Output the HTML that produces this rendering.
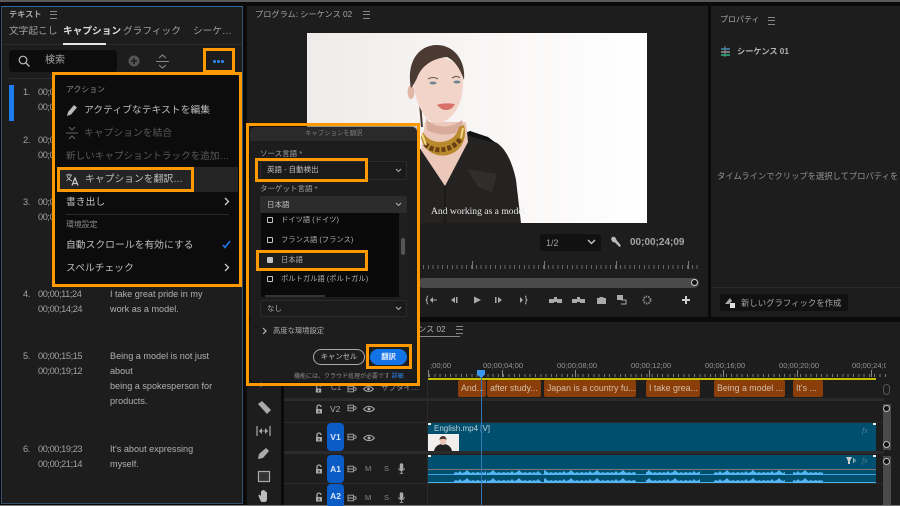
<!DOCTYPE html>
<html lang="ja"><head><meta charset="utf-8"><title>Premiere</title>
<style>
html,body{margin:0;padding:0;background:#0a0a0a}
#s{position:relative;width:900px;height:506px;overflow:hidden;background:#0a0a0a;font-family:"Liberation Sans","Noto Sans CJK JP",sans-serif;color:#bdbdbd}
#s div,#s span,#s svg{position:absolute}
#s span span{position:static}
.t{white-space:nowrap;line-height:14px;font-size:10px;margin-top:1px}
.tc{font-size:9.2px;letter-spacing:-.4px;color:#a2a2a2;margin-top:-1px}
.tx{font-size:9.1px;color:#b0b0b0;margin-top:-1px}
.m{font-size:9.8px;color:#bdbdbd}
.md{font-size:9.8px;color:#5a5a5a}
.d{font-size:7.5px;color:#b0b0b0}
.l{font-size:7.3px;color:#b0b0b0}
.r{font-size:7.6px;color:#959595}
.h{font-size:8.2px;color:#a8a8a8}
.p{background:#1d1d1d}
.o{border:3px solid #f90;box-sizing:border-box}
.ham{width:7px;height:6px;border-top:1px solid #888;border-bottom:1px solid #888}
.ham::after{content:"";position:absolute;left:0;top:2px;width:7px;height:1px;background:#888}
.clip{background:#8a3f0a;border-radius:2px;height:17px;top:380px;color:#d8bca6;font-size:8.8px;line-height:17px;padding-left:3px;box-sizing:border-box;white-space:nowrap;overflow:hidden}
.sel{left:260px;width:147px;border-radius:2px;box-sizing:border-box;border:1px solid #2b2b2b}
.cb{left:267px;width:4px;height:4px;border:1.5px solid #c4c4c4;border-radius:1px}
.bl{background:#0b5cc7;border-radius:4px;left:327px;width:17px;color:#d7e6fa;font-size:8.500px;font-weight:bold;text-align:center}
</style></head><body><div id="s">
<svg width="0" height="0" style="left:0;top:0"><defs>
<symbol id="lock" viewBox="0 0 10 10"><path d="M3 5V3a2 2 0 0 1 4 0" fill="none" stroke="#aaa" stroke-width="1.300"/><rect x="2" y="5" width="6" height="4.500" fill="#aaa"/><rect x="4.400" y="6.400" width="1.200" height="2" fill="#222"/></symbol>
<symbol id="film" viewBox="0 0 12 10"><path d="M1 1.500h7v7H1zM8 3l3 .7v2.600l-3 .7M1 5h7" fill="none" stroke="#aaa" stroke-width="1.100"/></symbol>
<symbol id="eye" viewBox="0 0 12 8"><path d="M.7 4C3.500.5 8.500.5 11.300 4 8.500 7.500 3.500 7.500.7 4z" fill="none" stroke="#aaa" stroke-width="1.100"/><circle cx="6" cy="4" r="1.500" fill="#aaa"/></symbol>
<symbol id="mic" viewBox="0 0 8 12"><rect x="2" y="0" width="4" height="8" rx="2" fill="#aaa"/><path d="M.8 5.500c0 4 6.400 4 6.400 0M4 9v2.500M2 11.500h4" fill="none" stroke="#aaa"/></symbol>
<pattern id="wv" width="26" height="5" patternUnits="userSpaceOnUse"><path d="M0 5V3l2-1 2 1 2-2 2 2 3-1 2-2 2 2 2 1 2-1 2 1 3-1 2 1v2z" fill="#55b5f2"/></pattern>
</defs></svg>

<div style="left:0;top:0;width:900px;height:2px;background:#5a5a5a"></div>
<div style="left:0;top:505px;width:900px;height:1px;background:#777"></div>

<!-- left panel -->
<div class="p" style="left:1px;top:6px;width:242px;height:498px;border:1px solid #35506c;border-top-color:#2c6aa8;box-sizing:border-box"></div>
<span class="t h" style="left:9px;top:7px;font-weight:bold">テキスト</span>
<div class="ham" style="left:50px;top:11px"></div>
<span class="t" style="left:9px;top:24px;font-size:9.700px;color:#a0a0a0">文字起こし</span>
<span class="t" style="left:63px;top:24px;font-size:9.700px;font-weight:bold;color:#dcdcdc">キャプション</span>
<span class="t" style="left:123px;top:24px;font-size:9.700px;color:#a0a0a0">グラフィック</span>
<span class="t" style="left:193px;top:24px;font-size:9.700px;color:#a0a0a0">シーケ…</span>
<div style="left:4px;top:44px;width:238px;height:1px;background:#2c2c2c"></div>
<div style="left:63px;top:43px;width:43px;height:2px;background:#e8e8e8"></div>
<div style="left:9px;top:50px;width:108px;height:22px;background:#0c0c0c;border-radius:3px"></div>
<svg style="left:18px;top:55px" width="12" height="12" viewBox="0 0 12 12"><circle cx="5" cy="5" r="3.800" fill="none" stroke="#bbb" stroke-width="1.200"/><path d="M8 8l3.500 3.500" stroke="#bbb" stroke-width="1.300"/></svg>
<span class="t" style="left:45px;top:53px;font-size:10px;color:#a5a5a5">検索</span>
<svg style="left:128px;top:55px" width="12" height="12" viewBox="0 0 12 12"><circle cx="6" cy="6" r="5.500" fill="#555"/><path d="M6 3v6M3 6h6" stroke="#1d1d1d" stroke-width="1.500"/></svg>
<svg style="left:156px;top:54px" width="13" height="15" viewBox="0 0 13 15"><path d="M3 4l3.500-3L10 4M0 7.500h13M3 11l3.500 3 3.500-3" fill="none" stroke="#888" stroke-width="1.100"/></svg>
<div class="o" style="left:203px;top:48px;width:32px;height:25px"></div>
<span style="left:213px;top:60px;width:3px;height:3px;border-radius:2px;background:#2f8af5"></span>
<span style="left:217px;top:60px;width:3px;height:3px;border-radius:2px;background:#2f8af5"></span>
<span style="left:221px;top:60px;width:3px;height:3px;border-radius:2px;background:#2f8af5"></span>
<div style="left:9px;top:78px;width:45px;height:1px;background:#2c2c2c"></div>
<div style="left:9px;top:85px;width:5px;height:36px;background:#1f7bf0"></div>

<span class="t tc" style="left:23px;top:86px">1.</span><span class="t tc" style="left:38px;top:86px">00;00</span><span class="t tc" style="left:38px;top:101px">00;00</span>
<span class="t tc" style="left:23px;top:134px">2.</span><span class="t tc" style="left:38px;top:134px">00;00</span><span class="t tc" style="left:38px;top:149px">00;00</span>
<span class="t tc" style="left:23px;top:196px">3.</span><span class="t tc" style="left:38px;top:196px">00;00</span><span class="t tc" style="left:38px;top:211px">00;00</span>
<span class="t tc" style="left:23px;top:288px">4.</span><span class="t tc" style="left:38px;top:288px">00;00;11;24</span><span class="t tc" style="left:38px;top:303px">00;00;14;24</span>
<span class="t tx" style="left:110px;top:288px">I take great pride in my</span><span class="t tx" style="left:110px;top:303px">work as a model.</span>
<span class="t tc" style="left:23px;top:350px">5.</span><span class="t tc" style="left:38px;top:350px">00;00;15;15</span><span class="t tc" style="left:38px;top:365px">00;00;19;12</span>
<span class="t tx" style="left:110px;top:350px">Being a model is not just</span><span class="t tx" style="left:110px;top:365px">about</span><span class="t tx" style="left:110px;top:380px">being a spokesperson for</span><span class="t tx" style="left:110px;top:395px">products.</span>
<span class="t tc" style="left:23px;top:443px">6.</span><span class="t tc" style="left:38px;top:443px">00;00;19;23</span><span class="t tc" style="left:38px;top:458px">00;00;21;14</span>
<span class="t tx" style="left:110px;top:443px">It's about expressing</span><span class="t tx" style="left:110px;top:458px">myself.</span>

<!-- menu -->
<div style="left:55px;top:75px;width:184px;height:209px;background:#0c0c0c;border-radius:3px"></div>
<div style="left:57px;top:167px;width:181px;height:25px;background:#242424"></div>
<div class="o" style="left:52px;top:72px;width:190px;height:215px"></div>
<div class="o" style="left:57px;top:167px;width:137px;height:25px"></div>
<span class="t" style="left:66px;top:82px;font-size:7.900px;color:#8a8a8a">アクション</span>
<svg style="left:66px;top:104px" width="12" height="13" viewBox="0 0 12 13"><path d="M1 12l1-4 6-7 3 2.500-6 7z" fill="#bbb"/></svg>
<span class="t m" style="left:84px;top:103px">アクティブなテキストを編集</span>
<svg style="left:66px;top:127px" width="12" height="13" viewBox="0 0 12 13"><path d="M3 0l3 3 3-3M0 6h12M3 12l3-3 3 3" fill="none" stroke="#666" stroke-width="1"/></svg>
<span class="t md" style="left:84px;top:126px">キャプションを結合</span>
<span class="t" style="left:66px;top:149px;font-size:9.600px;color:#5a5a5a">新しいキャプショントラックを追加…</span>
<svg style="left:66px;top:173px" width="13" height="13" viewBox="0 0 13 13"><path d="M0 2h6M3 .5V2M1 3c1 3 3 4 5 5M5 2.500C4 5 2.500 6.500.5 7.500" fill="none" stroke="#bbb" stroke-width=".9"/><path d="M6 12.500L9 5l3 7.500M7 10.500h4" fill="none" stroke="#ccc" stroke-width="1.200"/></svg>
<span class="t m" style="left:85px;top:172px">キャプションを翻訳…</span>
<span class="t m" style="left:66px;top:195px">書き出し</span>
<svg style="left:224px;top:197px" width="6" height="9" viewBox="0 0 6 9"><path d="M1 1l3.500 3.500L1 8" fill="none" stroke="#ccc" stroke-width="1.300"/></svg>
<div style="left:66px;top:214px;width:163px;height:1px;background:#2a2a2a"></div>
<span class="t" style="left:66px;top:217px;font-size:7.900px;color:#8a8a8a">環境設定</span>
<span class="t m" style="left:66px;top:238px">自動スクロールを有効にする</span>
<svg style="left:222px;top:240px" width="9" height="9" viewBox="0 0 9 9"><path d="M1 5l2 2.500L8 1" fill="none" stroke="#1f7bf0" stroke-width="1.500"/></svg>
<span class="t m" style="left:66px;top:261px">スペルチェック</span>
<svg style="left:224px;top:263px" width="6" height="9" viewBox="0 0 6 9"><path d="M1 1l3.500 3.500L1 8" fill="none" stroke="#ccc" stroke-width="1.300"/></svg>

<!-- program panel -->
<div class="p" style="left:247px;top:6px;width:461px;height:311px"></div>
<span class="t h" style="left:255px;top:7px">プログラム: シーケンス 02</span>
<div class="ham" style="left:363px;top:11px"></div>
<svg style="left:307px;top:33px" width="340" height="190" viewBox="307 33 340 190">
<defs><linearGradient id="bg" x1="0" x2="1"><stop offset="0" stop-color="#efebea"/><stop offset=".5" stop-color="#f8f6f5"/><stop offset="1" stop-color="#fff"/></linearGradient></defs>
<rect x="307" y="33" width="340" height="190" fill="url(#bg)"/>
<path d="M418 223V150L470 131 497 143C507 150 513 165 516 180L521 223z" fill="#252321"/>
<path d="M470 131l18 6 8 6-12-3-18-5z" fill="#111"/>
<path d="M421 150L445 186 468 142 466 122H425z" fill="#ecc8ba"/>
<path d="M426 118c6 10 24 12 36 2l1 10c-10 6-26 6-36 0z" fill="#d9ab9b"/>
<path d="M420 103l2 24" stroke="#4a3a32" stroke-width="2"/>
<ellipse cx="411" cy="92" rx="3.500" ry="7" fill="#e3b7a6"/>
<path d="M414 80C414 50 462 50 463 80 464 100 455 122 437 123 424 123 414 100 414 80z" fill="#f2d4c9"/>
<path d="M411 88C406 60 420 45 437 45 455 45 466 62 464 80 460 68 454 60 447 57 435 58 422 64 417 78 415 82 413 86 411 88z" fill="#4a3a32"/>
<path d="M428 79c3-2 7-2 10 0M452 78c3-2 6-2 8 0" stroke="#6b5d54" stroke-width="1.100" fill="none"/>
<ellipse cx="433" cy="83" rx="3.500" ry="1.500" fill="#6f8592"/><ellipse cx="457" cy="82" rx="3.500" ry="1.500" fill="#6f8592"/>
<path d="M437 105c4-2 12-2 18-1-2 4-5 6-9 6s-6-2-9-5z" fill="#d77066"/>
<path d="M421 137C423 150 435 158 448 155 460 152 468 140 464 125L459 127C458 135 450 142 440 142 432 142 426 138 423 132z" fill="#b98a2d"/>
<path d="M425 144C433 153 452 152 461 138" fill="none" stroke="#6a3f14" stroke-width="5" stroke-dasharray="4 2"/>
<path d="M422 134l4 11M463 128l-2 10" stroke="#f0d585" stroke-width="2"/>
<path d="M467 169l30 5-5 18-14-5z" fill="#302d2a"/>
<path d="M445 186v37" stroke="#111" stroke-width="1"/>
</svg>
<span class="t" style="left:431px;top:204px;font-family:'Liberation Serif','Noto Serif CJK SC',serif;font-size:9.600px;color:#e8e8e8">And working as a model</span>

<div style="left:540px;top:234px;width:61px;height:17px;background:#111;border-radius:2px"></div>
<span class="t" style="left:546px;top:235px;font-size:9px;color:#a5a5a5">1/2</span>
<svg style="left:587px;top:239px" width="9" height="6" viewBox="0 0 9 6"><path d="M1 1l3.500 3.500L8 1" fill="none" stroke="#ccc" stroke-width="1.300"/></svg>
<svg style="left:610px;top:236px" width="12" height="12" viewBox="0 0 12 12"><path d="M1 3l1.500-2.500 3 1 1 2.500L11 9.500 9.500 11 5 6.500 2.500 6z" fill="#bbb"/></svg>
<span class="t" style="left:630px;top:235px;font-size:10px;font-weight:bold;color:#a5a5a5">00;00;24;09</span>
<div style="left:423px;top:265px;width:277px;height:4px;background:repeating-linear-gradient(90deg,#666 0 1px,transparent 1px 4.800px)"></div>
<div style="left:472px;top:261px;width:1px;height:8px;background:#777"></div><div style="left:544px;top:261px;width:1px;height:8px;background:#777"></div><div style="left:616px;top:261px;width:1px;height:8px;background:#777"></div><div style="left:688px;top:261px;width:1px;height:8px;background:#777"></div>
<div style="left:418px;top:278px;width:281px;height:10px;background:#4a4a4a;border-radius:5px"></div>
<div style="left:691px;top:279px;width:5px;height:5px;border-radius:50%;background:#111;border:1.500px solid #ccc"></div>
<svg style="left:425px;top:294px" width="270" height="12" viewBox="425 294 270 12" fill="#aaa">
<path d="M428 296c-1 0-1 1-1 2v1l-1 1 1 1v1c0 1 0 2 1 2M430 300h7" stroke="#aaa" fill="none"/><path d="M433 297l-3 3 3 3z"/>
<path d="M451 300l4-3v6zM456 297h1.500v6H456z"/><path d="M474 296.500l7 3.500-7 3.500z"/>
<path d="M495 297h1.500v6H495zM498 297l4 3-4 3z"/><path d="M517 300h5M520 297l3 3-3 3z"/><path d="M525 296c1 0 1 1 1 2v1l1 1-1 1v1c0 1 0 2-1 2" stroke="#aaa" fill="none"/>
<path d="M549 299h5v-2h3v2h5v4h-5v-1h-3v1h-5z"/><path d="M572 299h5v-2h3v2h5v4h-5v-1h-3v1h-5z"/>
<path d="M597 298h2l1-1h3l1 1h2v6h-9z"/>
<path d="M617 295h6v5h-6z"/><path d="M621 300h5v4h-5" fill="none" stroke="#aaa"/>
<circle cx="647" cy="300" r="3.500" fill="none" stroke="#888" stroke-width="2" stroke-dasharray="1.500 1"/>
<path d="M682 299h3v-3h2v3h3v2h-3v3h-2v-3h-3z" fill="#ccc"/></svg>

<!-- properties panel -->
<div class="p" style="left:711px;top:6px;width:189px;height:311px"></div>
<span class="t h" style="left:720px;top:12px;font-size:8px">プロパティ</span>
<div class="ham" style="left:768px;top:17px"></div>
<svg style="left:720px;top:46px" width="11" height="11" viewBox="0 0 11 11"><path d="M5 0v11" stroke="#888"/><path d="M1 3h9" stroke="#4a8bb5" stroke-width="1.500"/><path d="M1 6h9" stroke="#999" stroke-width="1.500"/><path d="M1 9h9" stroke="#2fb58a" stroke-width="1.500"/></svg>
<span class="t" style="left:737px;top:44px;font-size:8.200px;font-weight:bold;color:#b0b0b0">シーケンス 01</span>
<span class="t" style="left:717px;top:168px;font-size:8.300px;color:#949494">タイムラインでクリップを選択してプロパティを</span>
<div style="left:711px;top:287px;width:189px;height:1px;background:#2a2a2a"></div>
<div style="left:720px;top:294px;width:128px;height:17px;background:#111;border-radius:2px"></div>
<svg style="left:725px;top:297px" width="11" height="11" viewBox="0 0 11 11"><path d="M0 7l5-6 2 3-3 3z" fill="#aaa"/><rect x="5" y="6" width="5" height="5" fill="#ddd"/></svg>
<span class="t" style="left:741px;top:295px;font-size:8.400px;color:#a5a5a5">新しいグラフィックを作成</span>

<!-- tools and timeline -->
<div class="p" style="left:247px;top:322px;width:34px;height:183px"></div>
<div class="p" style="left:284px;top:322px;width:616px;height:183px"></div>
<span class="t" style="left:418px;top:322px;font-size:8.200px;color:#b0b0b0">ンス 02</span>
<div class="ham" style="left:456px;top:326px"></div>
<div style="left:418px;top:336px;width:42px;height:1px;background:#888"></div>

<span class="t r" style="left:430px;top:358px">;00;00</span>
<span class="t r" style="left:483px;top:358px">00;00;04;00</span>
<span class="t r" style="left:557px;top:358px">00;00;08;00</span>
<span class="t r" style="left:631px;top:358px">00;00;12;00</span>
<span class="t r" style="left:705px;top:358px">00;00;16;00</span>
<span class="t r" style="left:779px;top:358px">00;00;20;00</span>
<span class="t r" style="left:852px;top:358px;width:34px;overflow:hidden">00;00;24;00</span>
<div style="left:429px;top:374px;width:457px;height:3px;background:repeating-linear-gradient(90deg,#777 0 1px,transparent 1px 5.300px)"></div>
<div style="left:428px;top:370px;width:1px;height:7px;background:#888"></div><div style="left:502px;top:370px;width:1px;height:7px;background:#888"></div><div style="left:575px;top:370px;width:1px;height:7px;background:#888"></div><div style="left:649px;top:370px;width:1px;height:7px;background:#888"></div><div style="left:723px;top:370px;width:1px;height:7px;background:#888"></div><div style="left:797px;top:370px;width:1px;height:7px;background:#888"></div><div style="left:871px;top:370px;width:1px;height:7px;background:#888"></div>
<div style="left:428px;top:378px;width:448px;height:2px;background:#c5c000"></div>

<div class="clip" style="left:458px;width:28px">And...</div>
<div class="clip" style="left:487px;width:54px">after study...</div>
<div class="clip" style="left:544px;width:92px">Japan is a country fu...</div>
<div class="clip" style="left:646px;width:54px">I take grea...</div>
<div class="clip" style="left:714px;width:71px">Being a model ...</div>
<div class="clip" style="left:793px;width:30px">It's ...</div>

<div style="left:284px;top:398px;width:600px;height:3px;background:#2b2b2b"></div>
<div style="left:284px;top:422px;width:600px;height:1px;background:#2b2b2b"></div>
<div style="left:284px;top:451px;width:600px;height:3px;background:#2b2b2b"></div>
<div style="left:284px;top:483px;width:600px;height:1px;background:#2b2b2b"></div>
<div style="left:427px;top:380px;width:1px;height:125px;background:#2a2a2a"></div>

<!-- track headers -->
<svg style="left:314px;top:384px" width="9" height="9"><use href="#lock"/></svg>
<span class="t" style="left:331px;top:380px;font-size:8px;color:#999">C1</span>
<svg style="left:347px;top:385px" width="10" height="8"><use href="#film"/></svg>
<svg style="left:363px;top:385px" width="11" height="8"><use href="#eye"/></svg>
<span class="t" style="left:381px;top:380px;font-size:7.600px;color:#999">サブタイ…</span>
<svg style="left:314px;top:404px" width="10" height="10"><use href="#lock"/></svg>
<span class="t" style="left:330px;top:401px;font-size:8.500px;color:#aaa">V2</span>
<svg style="left:347px;top:404px" width="10" height="8"><use href="#film"/></svg>
<svg style="left:363px;top:405px" width="12" height="8"><use href="#eye"/></svg>
<svg style="left:314px;top:432px" width="10" height="10"><use href="#lock"/></svg>
<div class="bl" style="top:423px;height:28px;line-height:28px">V1</div>
<svg style="left:347px;top:433px" width="10" height="8"><use href="#film"/></svg>
<svg style="left:363px;top:434px" width="12" height="8"><use href="#eye"/></svg>
<svg style="left:314px;top:464px" width="10" height="10"><use href="#lock"/></svg>
<div class="bl" style="top:455px;height:28px;line-height:28px">A1</div>
<svg style="left:347px;top:465px" width="10" height="8"><use href="#film"/></svg>
<span class="t" style="left:365px;top:461px;font-size:7.500px;color:#888">M</span>
<span class="t" style="left:384px;top:461px;font-size:7.500px;color:#888">S</span>
<svg style="left:398px;top:463px" width="7" height="11"><use href="#mic"/></svg>
<svg style="left:314px;top:492px" width="10" height="10"><use href="#lock"/></svg>
<div class="bl" style="top:484px;height:24px;line-height:24px">A2</div>
<svg style="left:347px;top:494px" width="10" height="8"><use href="#film"/></svg>
<span class="t" style="left:365px;top:490px;font-size:7.500px;color:#888">M</span>
<span class="t" style="left:384px;top:490px;font-size:7.500px;color:#888">S</span>
<svg style="left:398px;top:492px" width="7" height="11"><use href="#mic"/></svg>

<!-- tool icons -->
<svg style="left:254px;top:380px" width="20" height="125" viewBox="254 380 20 125">
<path d="M258 404l4-3 9 9-4 4z" fill="#aaa"/>
<path d="M257 426v10M270 426v10" stroke="#aaa" stroke-width="1.200"/><path d="M260 431h7M259.500 431l2-2v4zM267.500 431l-2-2v4z" stroke="#aaa" stroke-width=".8" fill="#aaa"/>
<path d="M258 459l1-5 7-6 3 3-6 7z" fill="#aaa"/>
<rect x="258.500" y="471.500" width="11" height="10" fill="#333" stroke="#aaa" stroke-width="1.200"/>
<path d="M259 497c-1-2 0-3 1-2l1 1v-5h1.500v4-5h1.500v5-4.500h1.500v4.500-3h1.500v7c0 2-1 3-3 3h-2c-1 0-2-2-3-5z" fill="#bbb"/>
<path d="M258 384h6M261 381v6" stroke="#888"/></svg>

<!-- clips -->
<div style="left:428px;top:423px;width:448px;height:28px;background:#004f6e"></div>
<span class="t" style="left:434px;top:421px;font-size:8px;color:#c0d2da">English.mp4 [V]</span>
<svg style="left:428px;top:434px" width="31" height="17" viewBox="0 0 31 17"><rect width="31" height="17" fill="#f1efee"/><path d="M6 17c1-5 5-7 9-7s8 2 9 7z" fill="#222"/><ellipse cx="15" cy="7" rx="3.200" ry="4" fill="#e8c5b6"/><path d="M11.500 6c0-3 2-4 3.500-4s3.500 1 3.500 4c-1-1.500-6-1.500-7 0z" fill="#4b3931"/></svg>
<span class="t" style="left:862px;top:423px;font-family:'Liberation Serif',serif;font-style:italic;font-size:8px;color:#4f7f95">fx</span>
<div style="left:428px;top:455px;width:448px;height:28px;background:#004f6e"></div>
<span class="t" style="left:862px;top:453px;font-family:'Liberation Serif',serif;font-style:italic;font-size:8px;color:#4f7f95">fx</span>
<svg style="left:846px;top:457px" width="10" height="7" viewBox="0 0 10 7"><path d="M0 0h6L4 4v3H2V4z" fill="#ccc"/><path d="M7.500 1v5M9 2v3" stroke="#9bb"/></svg>
<div style="left:428px;top:469px;width:448px;height:1px;background:#777"></div>
<div style="left:428px;top:474px;width:448px;height:1px;background:#3aa3e0"></div>
<div style="left:428px;top:482px;width:448px;height:1px;background:#4ab0ee"></div>
<svg style="left:428px;top:470px" width="448" height="13" viewBox="0 0 448 13">
<g fill="url(#wv)"><rect x="26" y="0" width="32" height="5"/><rect x="59" y="0" width="54" height="5"/><rect x="116" y="0" width="92" height="5"/><rect x="218" y="0" width="54" height="5"/><rect x="286" y="0" width="71" height="5"/><rect x="365" y="0" width="30" height="5"/></g>
<g fill="url(#wv)" transform="translate(0 8)"><rect x="26" y="0" width="32" height="5"/><rect x="59" y="0" width="54" height="5"/><rect x="116" y="0" width="92" height="5"/><rect x="218" y="0" width="54" height="5"/><rect x="286" y="0" width="71" height="5"/><rect x="365" y="0" width="30" height="5"/></g></svg>
<div style="left:481px;top:377px;width:1px;height:128px;background:#3278b4"></div>
<svg style="left:477px;top:370px" width="9" height="8" viewBox="0 0 9 8"><path d="M0 0h8v4.500L4 8 0 4.500z" fill="#3b97f2"/></svg>
<div style="left:428px;top:423px;width:3px;height:2px;background:#eee"></div>
<div style="left:873px;top:423px;width:3px;height:2px;background:#eee"></div>
<div style="left:428px;top:455px;width:3px;height:2px;background:#eee"></div>
<div style="left:873px;top:455px;width:3px;height:2px;background:#eee"></div>

<!-- scrollbars -->
<div style="left:883px;top:384px;width:7px;height:11px;border:1px solid #555;border-radius:4px;box-sizing:border-box"></div>
<div style="left:883px;top:404px;width:8px;height:46px;background:#4a4a4a"></div>
<div style="left:883px;top:405px;width:5px;height:5px;border-radius:50%;background:#111;border:1.500px solid #bbb"></div>
<div style="left:883px;top:441px;width:5px;height:5px;border-radius:50%;background:#111;border:1.500px solid #bbb"></div>
<div style="left:883px;top:456px;width:8px;height:49px;background:#4a4a4a"></div>
<div style="left:883px;top:458px;width:5px;height:5px;border-radius:50%;background:#111;border:1.500px solid #bbb"></div>

<!-- dialog -->
<div style="left:250px;top:127px;width:167px;height:255px;background:#1d1d1d;border-radius:5px;box-shadow:0 0 3px #000"></div>
<div style="left:250px;top:127px;width:167px;height:14px;background:#2a2a2a;border-radius:5px 5px 0 0"></div>
<span class="t" style="left:305px;top:126px;font-size:6.400px;color:#7d7d7d">キャプションを翻訳</span>
<span class="t d" style="left:260px;top:146px;color:#a0a0a0">ソース言語 *</span>
<div class="sel" style="top:161px;height:19px;background:#1b1b1b"></div>
<span class="t d" style="left:267px;top:162px;color:#c0c0c0">英語 - 自動検出</span>
<svg style="left:395px;top:168px" width="7" height="5" viewBox="0 0 7 5"><path d="M1 1l2.500 2.500L6 1" fill="none" stroke="#aaa" stroke-width="1.100"/></svg>
<div class="o" style="left:255px;top:158px;width:113px;height:24px"></div>
<span class="t d" style="left:260px;top:181px;color:#a0a0a0">ターゲット言語 *</span>
<div class="sel" style="top:196px;height:17px;background:#2c2c2c"></div>
<span class="t d" style="left:267px;top:197px;color:#c0c0c0">日本語</span>
<svg style="left:395px;top:202px" width="7" height="5" viewBox="0 0 7 5"><path d="M1 1l2.500 2.500L6 1" fill="none" stroke="#aaa" stroke-width="1.100"/></svg>
<div style="left:261px;top:213px;width:138px;height:84px;background:#0a0a0a;overflow:hidden"></div>
<div style="left:399px;top:213px;width:8px;height:84px;background:#1f1f1f"></div>
<div style="left:401px;top:238px;width:4px;height:17px;background:#555;border-radius:2px"></div>
<div class="cb" style="top:217px"></div>
<span class="t l" style="left:281px;top:212px">ドイツ語 (ドイツ)</span>
<div class="cb" style="top:237px"></div>
<span class="t l" style="left:281px;top:232px">フランス語 (フランス)</span>
<div style="left:258px;top:251px;width:108px;height:18px;background:#1d1d1d"></div>
<div class="cb" style="top:257px;background:#c4c4c4"></div>
<span class="t l" style="left:281px;top:252px">日本語</span>
<div class="o" style="left:256px;top:250px;width:112px;height:21px"></div>
<div class="cb" style="top:276px"></div>
<span class="t l" style="left:281px;top:271px;width:110px;overflow:hidden">ポルトガル語 (ポルトガル)</span>
<div style="left:265px;top:295px;width:60px;height:2px;background:#333"></div>
<div class="sel" style="top:300px;height:17px;background:#1b1b1b"></div>
<span class="t d" style="left:267px;top:301px">なし</span>
<svg style="left:395px;top:306px" width="7" height="5" viewBox="0 0 7 5"><path d="M1 1l2.500 2.500L6 1" fill="none" stroke="#aaa" stroke-width="1.100"/></svg>
<svg style="left:262px;top:327px" width="6" height="8" viewBox="0 0 6 8"><path d="M1 1l3 3-3 3" fill="none" stroke="#bbb" stroke-width="1.200"/></svg>
<span class="t l" style="left:273px;top:323px">高度な環境設定</span>
<div style="left:313px;top:349px;width:52px;height:16px;border:1.200px solid #a8a8a8;border-radius:9px;box-sizing:border-box;text-align:center;font-size:7.300px;line-height:14px;color:#c4c4c4">キャンセル</div>
<div style="left:370px;top:349px;width:37px;height:16px;background:#1373e6;border-radius:9px;text-align:center;font-size:7.300px;font-weight:bold;line-height:16px;color:#eaf2ff">翻訳</div>
<div class="o" style="left:366px;top:344px;width:46px;height:25px"></div>
<span class="t" style="left:294px;top:369px;font-size:6px;color:#8a8a8a">機能には、クラウド処理が必要です <span style="color:#2f8af5">詳細</span></span>
<div class="o" style="left:246px;top:123px;width:174px;height:263px"></div>
</div></body></html>
